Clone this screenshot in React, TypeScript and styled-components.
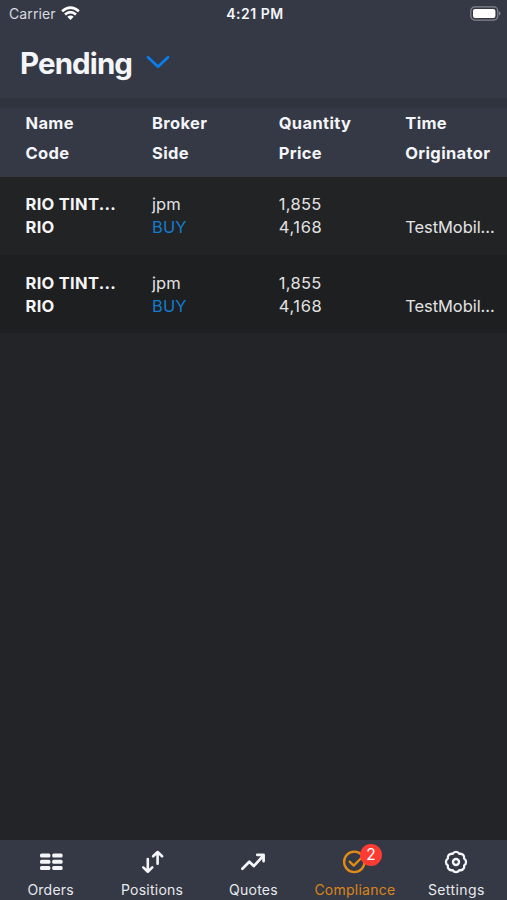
import React from "react";
import styled, { createGlobalStyle } from "styled-components";

const Global = createGlobalStyle`
  * { box-sizing: border-box; }
  body { margin: 0; background: #222427; overflow: hidden; }
`;

const Screen = styled.div`
  display: flex;
  flex-direction: column;
  width: 507px;
  height: 900px;
  overflow: hidden;
  background: #222427;
  color: #f4f5f8;
  font-family: Inter, "Liberation Sans", sans-serif;
`;

const StatusBar = styled.header`
  display: grid;
  grid-template-columns: 1fr auto 1fr;
  align-items: center;
  height: 27px;
  padding: 0 6px 0 9px;
  background: #353945;
`;

const Carrier = styled.div`
  display: flex;
  align-items: center;
  gap: 5px;
  font-size: 14px;
  letter-spacing: 0.1px;
  color: #d9dae0;
`;

const Clock = styled.div`
  font-size: 14px;
  font-weight: 600;
  letter-spacing: 0.5px;
`;

const BatterySlot = styled.div`
  display: flex;
  justify-content: flex-end;
`;

const TitleBar = styled.div`
  display: flex;
  align-items: center;
  gap: 14px;
  height: 71px;
  padding: 0 20px;
  background: #353945;
`;

const Title = styled.h1`
  margin: 0;
  font-size: 29.5px;
  line-height: 36px;
  font-weight: 700;
  letter-spacing: -0.9px;
`;

const HeaderGrid = styled.div`
  display: grid;
  grid-template-columns: 126.6px 126.6px 126.6px 1fr;
  height: 79px;
  padding: 0 8px 0 25.5px;
  border-top: 10px solid #30343f;
  background: #353945;
`;

const HeaderCell = styled.div`
  display: flex;
  flex-direction: column;
  font-size: 16.5px;
  font-weight: 700;
  line-height: 30px;
  letter-spacing: 0.35px;
`;

const Row = styled.div<{ $dark?: boolean }>`
  display: grid;
  grid-template-columns: 126.6px 126.6px 126.6px 1fr;
  height: 78px;
  padding: ${(p) => (p.$dark ? 17 : 16)}px 8px 0 25.5px;
  background: ${(p) => (p.$dark ? "#1e1f20" : "#222325")};
`;

const Cell = styled.div<{ $bold?: boolean }>`
  display: flex;
  flex-direction: column;
  font-size: 16.5px;
  font-weight: ${(p) => (p.$bold ? 700 : 400)};
  color: ${(p) => (p.$bold ? "#f5f5f6" : "#e2e2e3")};
  letter-spacing: ${(p) => (p.$bold ? 0.3 : 0)}px;
  line-height: 23px;
  white-space: nowrap;
`;

const Line = styled.span<{ $blue?: boolean; $spacing?: number }>`
  height: 23px;
  ${(p) => p.$spacing !== undefined && `letter-spacing: ${p.$spacing}px;`}
  ${(p) => p.$blue && "color: #147bcf;"}
`;

const Body = styled.main`
  flex: 1;
`;

const TabBar = styled.nav`
  display: grid;
  grid-template-columns: repeat(5, 1fr);
  height: 60px;
  background: #353945;
`;

const Tab = styled.div<{ $active?: boolean }>`
  display: flex;
  flex-direction: column;
  align-items: center;
  padding-top: 9px;
  color: ${(p) => (p.$active ? "#e28b16" : "#f4f5f8")};
`;

const IconBox = styled.div`
  position: relative;
  width: 26px;
  height: 26px;
`;

const TabLabel = styled.span<{ $spacing: number }>`
  margin-top: 5px;
  font-size: 14px;
  line-height: 20px;
  letter-spacing: ${(p) => p.$spacing}px;
  opacity: 0.94;
`;

const Badge = styled.span`
  position: absolute;
  left: 18px;
  top: -5px;
  width: 22px;
  height: 22px;
  border-radius: 50%;
  background: #fc3b33;
  color: #fff;
  font-size: 15.5px;
  line-height: 22px;
  text-align: center;
`;

const stroke = {
  fill: "none",
  stroke: "currentColor",
  strokeLinecap: "round" as const,
  strokeLinejoin: "round" as const,
};

const Wifi = () => (
  <svg width="19" height="15" viewBox="0 0 19 15">
    <g fill="none" stroke="#fff" strokeWidth="2.6">
      <path d="M1.1 5.3Q9.5-2.1 17.9 5.3" />
      <path d="M4 8.6Q9.5 3.8 15 8.6" />
    </g>
    <path d="M6.3 10.8Q9.5 8.1 12.7 10.8L9.5 14Z" fill="#fff" />
  </svg>
);

const Battery = () => (
  <svg width="31" height="15" viewBox="0 0 31 15">
    <rect x="0.8" y="0.9" width="27" height="13.2" rx="4" fill="none" stroke="#85878f" strokeWidth="1.2" />
    <rect x="3" y="3" width="22.4" height="9" rx="2" fill="#fff" />
    <path d="M29 5.3Q32 7.5 29 9.7Z" fill="#85878f" />
  </svg>
);

const Chevron = () => (
  <svg width="24" height="16" viewBox="0 0 24 16">
    <path d="M2 2.2L12 11.8L22 2.2" {...stroke} stroke="#087ff0" strokeWidth="2.6" />
  </svg>
);

const OrdersIcon = () => (
  <svg width="26" height="26" viewBox="0 0 26 26" fill="currentColor">
    {[4.6, 10.8, 17].map((y) => (
      <g key={y}>
        <rect x="2" y={y} width="10.4" height="4" rx="1.5" />
        <rect x="14.2" y={y} width="10.4" height="4" rx="1.5" />
      </g>
    ))}
  </svg>
);

const PositionsIcon = () => (
  <svg width="26" height="26" viewBox="0 0 26 26">
    <path d="M8.8 10V22.3M4.3 18.4L8.8 22.7L13.3 18.4M18.6 14.8V3.2M14.1 7.3L18.6 3L23.1 7.3" {...stroke} strokeWidth="2.6" />
  </svg>
);

const QuotesIcon = () => (
  <svg width="26" height="26" viewBox="0 0 26 26">
    <path d="M2.4 19.7L9.3 12.8L13.8 17.1L23 7M17.2 5.8H23.6V12.2" {...stroke} strokeWidth="2.7" />
  </svg>
);

const ComplianceIcon = () => (
  <svg width="26" height="26" viewBox="0 0 26 26">
    <circle cx="12.3" cy="12.9" r="10.2" {...stroke} strokeWidth="2.3" />
    <path d="M7.6 12.6L11.7 16.6L19.5 8.8" {...stroke} strokeWidth="2.3" />
  </svg>
);

// Eight rounded lobes joined at valleys on a circle of radius 8.8.
const gearPath =
  Array.from({ length: 9 }, (_, i) => {
    const a = ((i * 45 + 22.5) * Math.PI) / 180;
    const x = (13 + 8.8 * Math.cos(a)).toFixed(2);
    const y = (13 + 8.8 * Math.sin(a)).toFixed(2);
    return i === 0 ? `M${x} ${y}` : `A3.9 3.9 0 0 1 ${x} ${y}`;
  }).join("") + "Z";

const SettingsIcon = () => (
  <svg width="26" height="26" viewBox="0 0 26 26">
    <path d={gearPath} {...stroke} strokeWidth="2.3" />
    <circle cx="13" cy="13" r="3" {...stroke} strokeWidth="2.4" />
  </svg>
);

const columns = [
  ["Name", "Code"],
  ["Broker", "Side"],
  ["Quantity", "Price"],
  ["Time", "Originator"],
];

const tabs = [
  { label: "Orders", Icon: OrdersIcon, spacing: 0.25 },
  { label: "Positions", Icon: PositionsIcon, spacing: 0.25 },
  { label: "Quotes", Icon: QuotesIcon, spacing: 0.25 },
  { label: "Compliance", Icon: ComplianceIcon, spacing: 0.25, badge: 2 },
  { label: "Settings", Icon: SettingsIcon, spacing: 0.4 },
];

const OrderRow = ({ dark }: { dark?: boolean }) => (
  <Row $dark={dark}>
    <Cell $bold>
      <Line>RIO TINT...</Line>
      <Line>RIO</Line>
    </Cell>
    <Cell>
      <Line>jpm</Line>
      <Line $blue>BUY</Line>
    </Cell>
    <Cell>
      <Line $spacing={0.3}>1,855</Line>
      <Line $spacing={0.6}>4,168</Line>
    </Cell>
    <Cell>
      <Line />
      <Line $spacing={-0.08}>TestMobil...</Line>
    </Cell>
  </Row>
);

export default function App() {
  return (
    <Screen>
      <Global />
      <StatusBar>
        <Carrier>
          Carrier <Wifi />
        </Carrier>
        <Clock>4:21 PM</Clock>
        <BatterySlot>
          <Battery />
        </BatterySlot>
      </StatusBar>
      <TitleBar>
        <Title>Pending</Title>
        <Chevron />
      </TitleBar>
      <HeaderGrid>
        {columns.map(([top, bottom]) => (
          <HeaderCell key={top}>
            <span>{top}</span>
            <span>{bottom}</span>
          </HeaderCell>
        ))}
      </HeaderGrid>
      <OrderRow />
      <OrderRow dark />
      <Body />
      <TabBar>
        {tabs.map(({ label, Icon, spacing, badge }) => (
          <Tab key={label} $active={!!badge}>
            <IconBox>
              <Icon />
              {badge && <Badge>{badge}</Badge>}
            </IconBox>
            <TabLabel $spacing={spacing}>{label}</TabLabel>
          </Tab>
        ))}
      </TabBar>
    </Screen>
  );
}
